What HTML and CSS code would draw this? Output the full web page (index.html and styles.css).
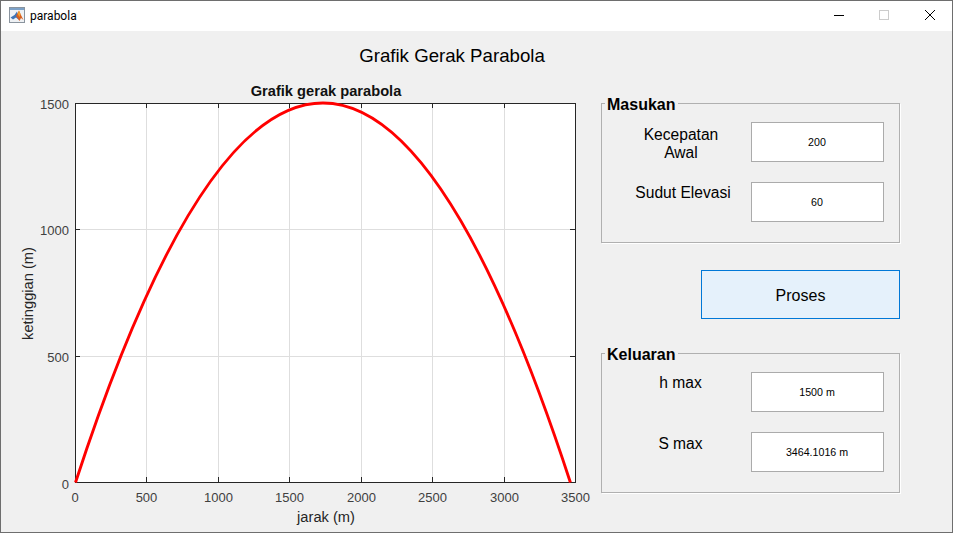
FILE: index.html
```html
<!DOCTYPE html>
<html lang="en">
<head>
    <meta charset="UTF-8">
    <title>parabola</title>
    <link rel="stylesheet" href="styles.css">
</head>
<body>
    <div class="window">
        <div class="titlebar">
            <svg class="app-icon" width="16" height="16" viewBox="0 0 16 16">
                <rect x="0.5" y="0.5" width="15" height="15" fill="#eef1f4" stroke="#8a949e"/>
                <rect x="1" y="1" width="14" height="2" fill="#7da2c8"/>
                <path d="M1.5 10.5 L5.5 8 L8 4.5 L10 13 L7 10.5 L4 12.5 Z" fill="#3f74b5"/>
                <path d="M7 9 L10 3.5 L11.5 7 L14.5 13 L12 11 L10.5 14 Z" fill="#d9601f"/>
                <path d="M10 3.5 L11.5 7 L10.5 10 L8.8 7 Z" fill="#f2a22e"/>
            </svg>
            <span class="app-name">parabola</span>
            <div class="controls">
                <svg class="control" width="46" height="30" viewBox="0 0 46 30">
                    <path d="M20 14.5 H30" stroke="#000" fill="none"/>
                </svg>
                <svg class="control" width="46" height="30" viewBox="0 0 46 30">
                    <rect x="19.5" y="9.5" width="9" height="9" stroke="#cccccc" fill="none"/>
                </svg>
                <svg class="control" width="46" height="30" viewBox="0 0 46 30">
                    <path d="M19 9 L29 19 M29 9 L19 19" stroke="#000" fill="none"/>
                </svg>
            </div>
        </div>

        <h1 class="heading">Grafik Gerak Parabola</h1>

        <div class="main">
            <svg class="chart" width="599" height="457" viewBox="1 75 599 457">
                <rect x="75.5" y="103.5" width="500" height="379" fill="#fff"/>
                <g class="grid">
                    <path d="M146.5 103V482 M218.5 103V482 M289.5 103V482 M361.5 103V482 M432.5 103V482 M504.5 103V482"/>
                    <path d="M75 229.5H575 M75 356.5H575"/>
                </g>
                <g class="ticks">
                    <path d="M146.5 103v5 M218.5 103v5 M289.5 103v5 M361.5 103v5 M432.5 103v5 M504.5 103v5"/>
                    <path d="M146.5 482v-5 M218.5 482v-5 M289.5 482v-5 M361.5 482v-5 M432.5 482v-5 M504.5 482v-5"/>
                    <path d="M75 229.5h5 M75 356.5h5 M575 229.5h-5 M575 356.5h-5"/>
                    <rect x="75.5" y="103.5" width="500" height="379" fill="none"/>
                </g>
                <path class="curve" d="M75.5 482.5 Q322.9 -276.5 570.4 482.5"/>
                <g class="tick-labels-y">
                    <text x="69" y="109">1500</text>
                    <text x="69" y="235">1000</text>
                    <text x="69" y="362">500</text>
                    <text x="69" y="489">0</text>
                </g>
                <g class="tick-labels-x">
                    <text x="75" y="502">0</text>
                    <text x="146.5" y="502">500</text>
                    <text x="218.5" y="502">1000</text>
                    <text x="289.5" y="502">1500</text>
                    <text x="361.5" y="502">2000</text>
                    <text x="432.5" y="502">2500</text>
                    <text x="504.5" y="502">3000</text>
                    <text x="575.5" y="502">3500</text>
                </g>
                <text class="axes-title" x="326" y="96">Grafik gerak parabola</text>
                <text class="axes-label" x="326" y="522">jarak (m)</text>
                <text class="axes-label" transform="translate(33 293.5) rotate(-90)">ketinggian (m)</text>
            </svg>

            <div class="side">
                <div class="panel">
                    <div class="panel-title">Masukan</div>
                    <div class="row">
                        <div class="label label-two-lines">Kecepatan<br>Awal</div>
                        <div class="field">200</div>
                    </div>
                    <div class="row">
                        <div class="label">Sudut Elevasi</div>
                        <div class="field">60</div>
                    </div>
                </div>

                <button class="process-btn">Proses</button>

                <div class="panel">
                    <div class="panel-title">Keluaran</div>
                    <div class="row">
                        <div class="label label-short">h max</div>
                        <div class="field">1500 m</div>
                    </div>
                    <div class="row">
                        <div class="label label-short label-low">S max</div>
                        <div class="field">3464.1016 m</div>
                    </div>
                </div>
            </div>
        </div>
    </div>
</body>
</html>
```

FILE: styles.css
```css
* {
    box-sizing: border-box;
}

body {
    margin: 0;
    font-family: "Liberation Sans", Arial, sans-serif;
    color: #000;
}

.window {
    width: 953px;
    height: 533px;
    background: #f0f0f0;
    border: 1px solid #6e6e6e;
    overflow: hidden;
}

.titlebar {
    height: 30px;
    background: #fff;
    display: flex;
    align-items: center;
    padding-left: 8px;
}

.app-icon {
    margin-right: 5px;
    margin-bottom: 2px;
}

.app-name {
    font-family: Roboto, "Noto Sans", sans-serif;
    font-size: 12px;
}

.controls {
    margin-left: auto;
    display: flex;
}

.control {
    display: block;
}

.heading {
    margin: 0;
    height: 44px;
    padding-top: 14px;
    padding-right: 49px;
    font-size: 18.67px;
    font-weight: 400;
    line-height: 21px;
    text-align: center;
}

.main {
    display: flex;
}

.chart {
    display: block;
    overflow: visible;
    flex: none;
}

.grid path {
    stroke: #dedede;
    fill: none;
}

.ticks path,
.ticks rect {
    stroke: #262626;
    fill: none;
}

.curve {
    stroke: #ff0000;
    stroke-width: 2.9;
    fill: none;
}

.tick-labels-y text,
.tick-labels-x text {
    font-size: 13px;
    fill: #404040;
}

.tick-labels-y text {
    text-anchor: end;
}

.tick-labels-x text {
    text-anchor: middle;
}

.axes-title {
    font-size: 14.67px;
    font-weight: 700;
    fill: #111;
    text-anchor: middle;
}

.axes-label {
    font-size: 14.67px;
    fill: #262626;
    text-anchor: middle;
}

.side {
    width: 300px;
    padding-top: 28px;
    display: flex;
    flex-direction: column;
}

.panel {
    position: relative;
    width: 299px;
    height: 140px;
    margin-left: 1px;
    padding: 18px 15px 0 0;
    border: 1px solid #b0b0b0;
    box-shadow: 1px 1px 0 #fff;
    display: flex;
    flex-direction: column;
    gap: 20px;
}

.panel-title {
    position: absolute;
    left: 3px;
    top: -8px;
    padding: 0 3px 0 2px;
    background: #f0f0f0;
    font-size: 16px;
    font-weight: 700;
    line-height: 18px;
}

.row {
    display: flex;
    justify-content: space-between;
    height: 40px;
}

.label {
    width: 148px;
    padding: 2px 0 0 14px;
    font-size: 15.6px;
    line-height: 18px;
    text-align: center;
}

.label-two-lines {
    padding: 4px 2px 0 12px;
}

.label-short {
    padding-right: 5px;
}

.label-low {
    padding-top: 3px;
}

.field {
    width: 133px;
    height: 40px;
    padding-right: 1px;
    background: #fff;
    border: 1px solid #ababab;
    display: flex;
    align-items: center;
    justify-content: center;
    font-size: 10.67px;
}

.process-btn {
    align-self: flex-end;
    width: 199px;
    height: 49px;
    margin: 27px 0 34px;
    padding: 3px 6px 1px;
    background: #e5f1fb;
    border: 1px solid #0078d7;
    font-family: inherit;
    font-size: 16px;
    color: #000;
}
```
